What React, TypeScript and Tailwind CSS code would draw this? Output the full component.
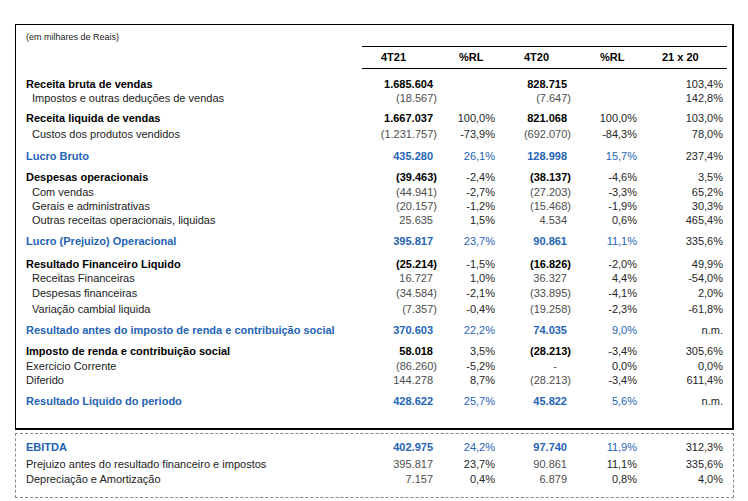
import React from "react";

type Kind = "head" | "sub" | "blue" | "plain";
type R = {
  label: string;
  a: string;
  b: string;
  c: string;
  d: string;
  e: string;
  kind: Kind;
  mt: number;
};

const MT: Record<number, string> = {
  [-1]: "-mt-px",
  0: "",
  1: "mt-px",
  2: "mt-[2px]",
  5: "mt-[5px]",
  6: "mt-[6px]",
  7: "mt-[7px]",
  8: "mt-[8px]",
};

const rows: R[] = [
  { label: "Receita bruta de vendas", a: "1.685.604", b: "", c: "828.715", d: "", e: "103,4%", kind: "head", mt: 8 },
  { label: "Impostos e outras deduções de vendas", a: "(18.567)", b: "", c: "(7.647)", d: "", e: "142,8%", kind: "sub", mt: -1 },
  { label: "Receita liquida de vendas", a: "1.667.037", b: "100,0%", c: "821.068", d: "100,0%", e: "103,0%", kind: "head", mt: 5 },
  { label: "Custos dos produtos vendidos", a: "(1.231.757)", b: "-73,9%", c: "(692.070)", d: "-84,3%", e: "78,0%", kind: "sub", mt: 1 },
  { label: "Lucro Bruto", a: "435.280", b: "26,1%", c: "128.998", d: "15,7%", e: "237,4%", kind: "blue", mt: 7 },
  { label: "Despesas operacionais", a: "(39.463)", b: "-2,4%", c: "(38.137)", d: "-4,6%", e: "3,5%", kind: "head", mt: 6 },
  { label: "Com vendas", a: "(44.941)", b: "-2,7%", c: "(27.203)", d: "-3,3%", e: "65,2%", kind: "sub", mt: 0 },
  { label: "Gerais e administrativas", a: "(20.157)", b: "-1,2%", c: "(15.468)", d: "-1,9%", e: "30,3%", kind: "sub", mt: -1 },
  { label: "Outras receitas operacionais, liquidas", a: "25.635", b: "1,5%", c: "4.534", d: "0,6%", e: "465,4%", kind: "sub", mt: -1 },
  { label: "Lucro (Prejuizo) Operacional", a: "395.817", b: "23,7%", c: "90.861", d: "11,1%", e: "335,6%", kind: "blue", mt: 6 },
  { label: "Resultado Financeiro Liquido", a: "(25.214)", b: "-1,5%", c: "(16.826)", d: "-2,0%", e: "49,9%", kind: "head", mt: 8 },
  { label: "Receitas Financeiras", a: "16.727", b: "1,0%", c: "36.327", d: "4,4%", e: "-54,0%", kind: "sub", mt: -1 },
  { label: "Despesas financeiras", a: "(34.584)", b: "-2,1%", c: "(33.895)", d: "-4,1%", e: "2,0%", kind: "sub", mt: 0 },
  { label: "Variação cambial liquida", a: "(7.357)", b: "-0,4%", c: "(19.258)", d: "-2,3%", e: "-61,8%", kind: "sub", mt: 1 },
  { label: "Resultado antes do imposto de renda e contribuição social", a: "370.603", b: "22,2%", c: "74.035", d: "9,0%", e: "n.m.", kind: "blue", mt: 6 },
  { label: "Imposto de renda e contribuição social", a: "58.018", b: "3,5%", c: "(28.213)", d: "-3,4%", e: "305,6%", kind: "head", mt: 6 },
  { label: "Exercicio Corrente", a: "(86.260)", b: "-5,2%", c: "-", d: "0,0%", e: "0,0%", kind: "plain", mt: 0 },
  { label: "Diferido", a: "144.278", b: "8,7%", c: "(28.213)", d: "-3,4%", e: "611,4%", kind: "plain", mt: -1 },
  { label: "Resultado Liquido do periodo", a: "428.622", b: "25,7%", c: "45.822", d: "5,6%", e: "n.m.", kind: "blue", mt: 6 },
];

const ebitda: R[] = [
  { label: "EBITDA", a: "402.975", b: "24,2%", c: "97.740", d: "11,9%", e: "312,3%", kind: "blue", mt: 0 },
  { label: "Prejuizo antes do resultado financeiro e impostos", a: "395.817", b: "23,7%", c: "90.861", d: "11,1%", e: "335,6%", kind: "plain", mt: 2 },
  { label: "Depreciação e Amortização", a: "7.157", b: "0,4%", c: "6.879", d: "0,8%", e: "4,0%", kind: "plain", mt: 0 },
];

function Amount({ v, w, cls }: { v: string; w: string; cls: string }) {
  const pad = v === "-" ? "pr-[14px]" : v.endsWith(")") ? "" : "pr-[4px]";
  return <div className={`${w} shrink-0 text-right whitespace-nowrap ${pad} ${cls}`}>{v}</div>;
}

function Pct({ v, w, cls }: { v: string; w: string; cls: string }) {
  return <div className={`${w} shrink-0 text-right whitespace-nowrap ${cls}`}>{v}</div>;
}

function Row({ r }: { r: R }) {
  const blue = r.kind === "blue";
  const head = r.kind === "head";
  const labelCls = blue ? "font-bold text-[#1f63b5]" : head ? "font-bold text-black" : "text-[#222]";
  const numCls = blue ? "font-bold text-[#1f63b5]" : head ? "font-bold text-black" : "text-[#4d4d4d]";
  const pctCls = blue ? "text-[#1f63b5]" : "text-[#262626]";
  return (
    <div className={`flex h-[15px] items-center leading-[15px] ${MT[r.mt]}`}>
      <div className={`w-[346px] shrink-0 whitespace-nowrap ${r.kind === "sub" ? "pl-[16px]" : "pl-[10px]"} ${labelCls}`}>
        {r.label}
      </div>
      <Amount v={r.a} w="w-[75px]" cls={numCls} />
      <Pct v={r.b} w="w-[58px]" cls={pctCls} />
      <Amount v={r.c} w="w-[76px]" cls={numCls} />
      <Pct v={r.d} w="w-[66px]" cls={pctCls} />
      <Pct v={r.e} w="w-[86px]" cls="text-[#262626]" />
    </div>
  );
}

export default function App() {
  return (
    <div
      className="w-[748px] h-[501px] bg-white pt-[24px] text-[11px]"
      style={{ fontFamily: '"Liberation Sans", Arial, sans-serif' }}
    >
      <div className="ml-[15px] w-[719px] border-l border-t border-r-2 border-b-2 border-black pb-[19px]">
        <div className="pt-[6px] pl-[10px] h-[18px] text-[9px] leading-[12px] text-[#222]">(em milhares de Reais)</div>
        <div className="mt-[3px] flex">
          <div className="w-[346px] shrink-0" />
          <div className="w-[365px] flex h-[23px] items-center border-t border-b border-black font-bold text-black leading-[15px]">
            <div className="w-[75px] pl-[19px]">4T21</div>
            <div className="w-[58px] pl-[22px]">%RL</div>
            <div className="w-[76px] pl-[29px]">4T20</div>
            <div className="w-[66px] pl-[29px]">%RL</div>
            <div className="w-[90px] pl-[25px]">21 x 20</div>
          </div>
        </div>
        {rows.map((r, i) => (
          <Row key={i} r={r} />
        ))}
      </div>
      <div className="ml-[15px] mt-[3px] w-[719px] border border-dashed border-[#8a8a8a] pt-[6px] pb-[10px]">
        {ebitda.map((r, i) => (
          <Row key={i} r={r} />
        ))}
      </div>
    </div>
  );
}
